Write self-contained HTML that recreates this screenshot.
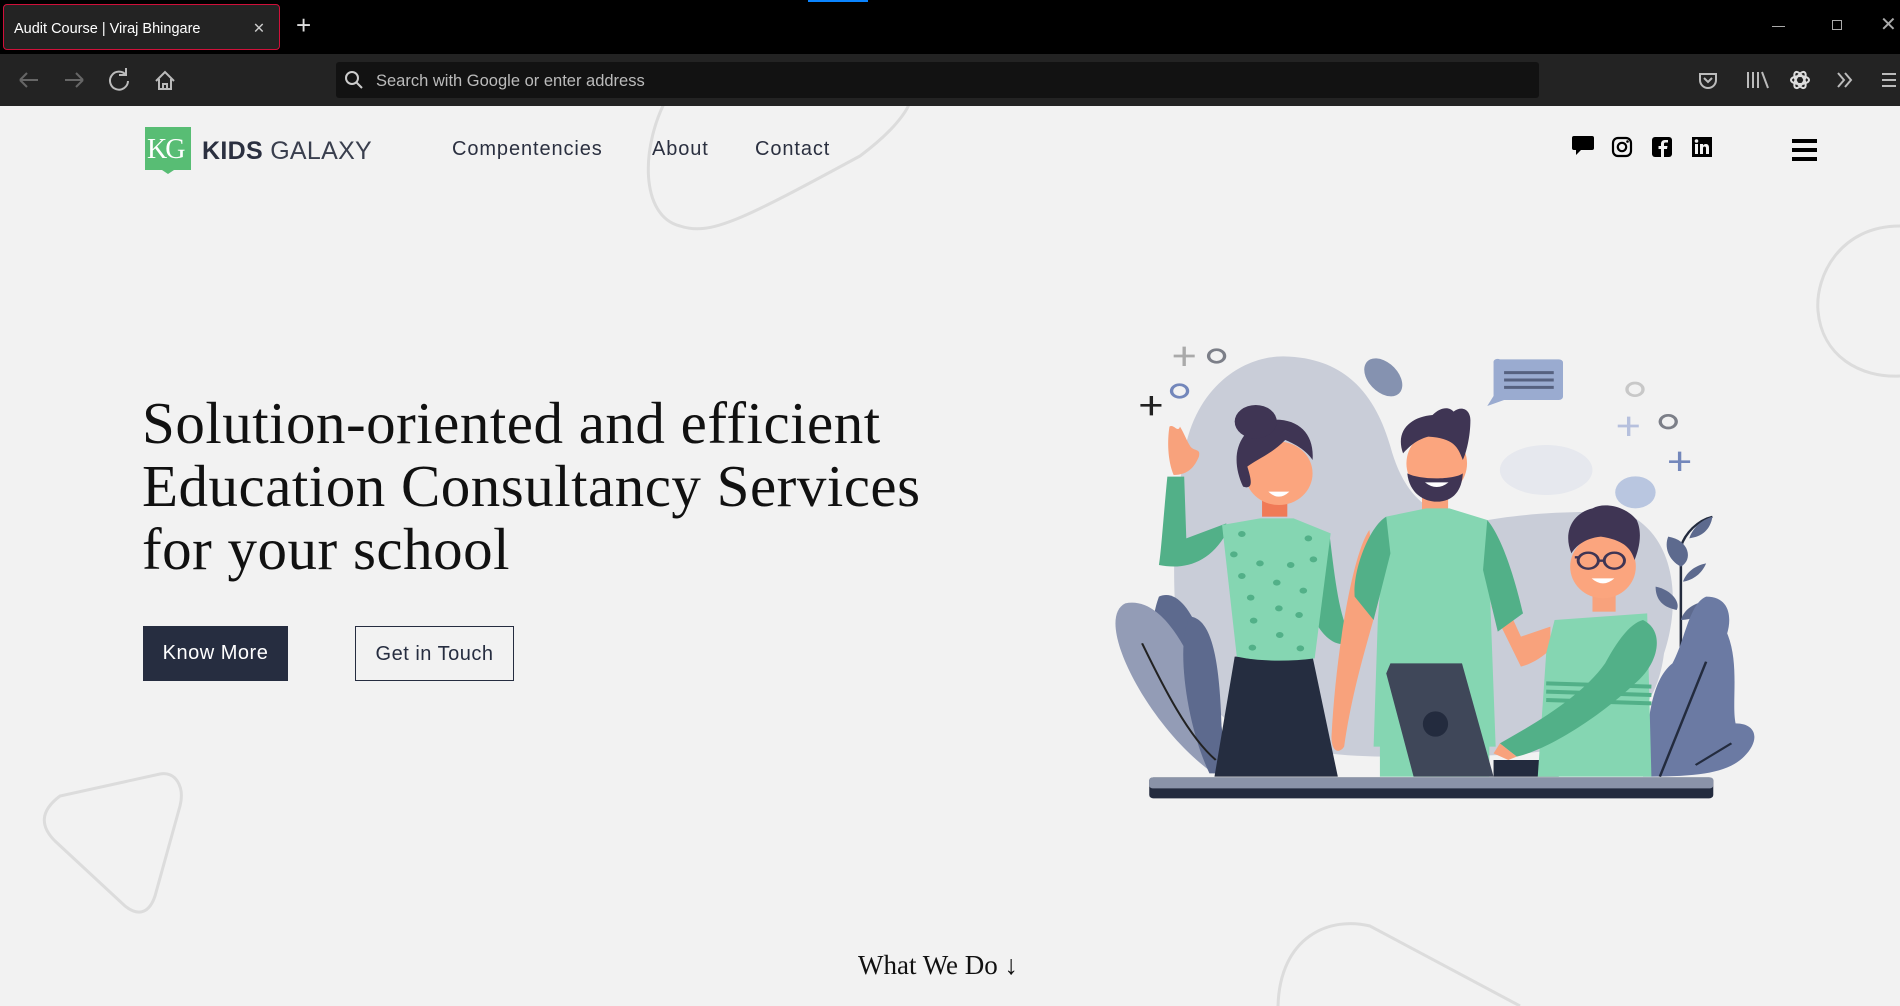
<!DOCTYPE html>
<html><head><meta charset="utf-8"><style>
*{margin:0;padding:0;box-sizing:border-box}
body{width:1900px;height:1006px;overflow:hidden;background:#f2f2f2;font-family:"Liberation Sans",sans-serif;position:relative}
.abs{position:absolute}
#tabs{left:0;top:0;width:1900px;height:54px;background:#000}
#tab{left:3px;top:4px;width:277px;height:46px;background:#232323;border:1px solid #d0103a;border-radius:4px;color:#fff;font-size:14.5px;line-height:48px;padding-left:10px}
#bar{left:0;top:54px;width:1900px;height:52px;background:#232323}
#url{left:336px;top:62px;width:1203px;height:36px;background:#121212;border-radius:3px;color:#bbb;font-size:16.5px;line-height:38px;padding-left:40px}
.nav{top:138px;font-size:20px;color:#2b3040;letter-spacing:0.9px}
h1{position:absolute;left:142px;top:392px;font-family:"Liberation Serif",serif;font-weight:normal;font-size:59px;line-height:63px;color:#111;letter-spacing:0.5px}
.btn{top:626px;height:55px;font-size:20px;line-height:55px;text-align:center;letter-spacing:0.5px}
</style></head><body>
<div class="abs" id="tabs"></div>
<div class="abs" id="tab">Audit Course | Viraj Bhingare<span style="position:absolute;right:14px;color:#ccc">✕</span></div>
<div class="abs" style="left:296px;top:10px;color:#ddd;font-size:26px">+</div>
<div class="abs" style="left:808px;top:0;width:60px;height:2px;background:#0a84ff"></div>
<div class="abs" style="left:1772px;top:26px;width:13px;height:1px;background:#aaa"></div>
<div class="abs" style="left:1832px;top:20px;width:10px;height:10px;border:1px solid #aaa"></div>
<div class="abs" style="left:1880px;top:12px;color:#aaa;font-size:20px">✕</div>
<div class="abs" id="bar"></div>
<svg class="abs" style="left:0;top:54px" width="1900" height="52" fill="none" stroke-width="2">
<path d="M20 26h18M20 26l7-7M20 26l7 7" stroke="#666"/>
<path d="M65 26h18M83 26l-7-7M83 26l-7 7" stroke="#666"/>
<path d="M126 21a9 9 0 1 0 2 6M126 14v7h-7" stroke="#bbb"/>
<path d="M156 27l9-9 9 9M159 25v10h12V25M163 35v-5h4v5" stroke="#bbb"/>
<path d="M1700 20h16v6a8 8 0 0 1-16 0z M1704 24l4 4 4-4" stroke="#bbb"/>
<path d="M1748 18v16M1753 18v16M1758 18v16M1762 18l6 16" stroke="#bbb"/>
<ellipse cx="1800" cy="26" rx="9" ry="4" stroke="#ddd"/><ellipse cx="1800" cy="26" rx="9" ry="4" transform="rotate(60 1800 26)" stroke="#ddd"/><ellipse cx="1800" cy="26" rx="9" ry="4" transform="rotate(-60 1800 26)" stroke="#ddd"/>
<path d="M1838 19l6 7-6 7M1845 19l6 7-6 7" stroke="#bbb"/>
<path d="M1882 20h14M1882 26h14M1882 32h14" stroke="#bbb"/>
</svg>
<div class="abs" id="url">Search with Google or enter address</div>
<svg class="abs" style="left:344px;top:70px" width="20" height="20" fill="none" stroke="#ccc" stroke-width="2"><circle cx="8" cy="8" r="6"/><path d="M12 12l6 6"/></svg>

<svg class="abs" style="left:0;top:106px" width="1900" height="900" fill="none" stroke="#dcdcdc" stroke-width="3">
<path d="M668 -10C640 40 640 110 680 120 710 130 740 115 860 50 900 20 910 0 912 -10"/>
<path d="M1900 120C1840 120 1815 170 1818 205 1822 250 1860 272 1900 270"/>
<path d="M60 690C40 705 40 720 55 735L125 800C140 812 150 805 155 790L180 700C185 680 175 665 160 668Z"/>
<path d="M1278 900C1280 830 1330 810 1370 820L1520 900"/>
</svg>

<div class="abs" style="left:145px;top:127px;width:46px;height:43px;background:#58bd74"></div>
<div class="abs" style="left:159px;top:168px;width:0;height:0;border-left:9px solid transparent;border-right:9px solid transparent;border-top:6px solid #58bd74"></div>
<div class="abs" style="left:147px;top:134px;color:#fff;font-family:'Liberation Serif',serif;font-size:28px;letter-spacing:-2px">KG</div>
<div class="abs" style="left:202px;top:137px;font-size:25px;color:#2b3040;letter-spacing:0.3px"><b>KIDS</b> <span style="color:#3a3f4e">GALAXY</span></div>
<div class="abs nav" style="left:452px">Compentencies</div>
<div class="abs nav" style="left:652px">About</div>
<div class="abs nav" style="left:755px">Contact</div>

<svg class="abs" style="left:1570px;top:134px" width="150" height="26">
<path d="M3 2h18a2 2 0 0 1 2 2v10a2 2 0 0 1-2 2H10l-5 5v-5H3a2 2 0 0 1-2-2V4a2 2 0 0 1 2-2z" fill="#000" transform="translate(1 0)"/>
<rect x="43" y="4" width="18" height="18" rx="5" fill="none" stroke="#000" stroke-width="2.2"/><circle cx="52" cy="13" r="4.2" fill="none" stroke="#000" stroke-width="2.2"/><circle cx="57.5" cy="7.5" r="1.3" fill="#000"/>
<rect x="82" y="3" width="20" height="20" rx="3" fill="#000"/><path d="M94 23v-8h3l.5-3H94v-2c0-1 .4-1.5 1.5-1.5H98V6h-3c-3 0-4 2-4 4v2h-2.5v3H91v8z" fill="#f2f2f2"/>
<rect x="122" y="3" width="20" height="20" fill="#000"/><rect x="125" y="10" width="3" height="10" fill="#f2f2f2"/><circle cx="126.5" cy="7" r="1.8" fill="#f2f2f2"/><path d="M130 10h3v1.5c1-2 6-2.5 6 2V20h-3v-6c0-2-3-2-3 0v6h-3z" fill="#f2f2f2"/>
</svg>
<div class="abs" style="left:1792px;top:139px;width:25px;height:3.5px;background:#000"></div>
<div class="abs" style="left:1792px;top:148px;width:25px;height:3.5px;background:#000"></div>
<div class="abs" style="left:1792px;top:157px;width:25px;height:3.5px;background:#000"></div>

<h1>Solution-oriented and efficient<br>Education Consultancy Services<br>for your school</h1>
<div class="abs btn" style="left:143px;width:145px;background:#262d40;color:#fff">Know More</div>
<div class="abs btn" style="left:355px;width:159px;border:1px solid #262d40;color:#262d40">Get in Touch</div>

<div class="abs" style="left:858px;top:950px;font-family:'Liberation Serif',serif;font-size:27px;color:#111">What We Do ↓</div>

<svg class="abs" style="left:1100px;top:320px" width="660" height="490" viewBox="0 0 1568 1470" preserveAspectRatio="none">
<path d="M200 400C230 180 360 100 450 110 600 120 660 250 690 380 720 520 780 600 900 605 1000 580 1140 570 1250 580 1370 650 1380 850 1340 1000 1310 1300 1100 1310 700 1310 300 1310 220 1160 180 900 170 700 180 560 200 400Z" fill="#c9cdd8"/>
<ellipse cx="1060" cy="450" rx="110" ry="75" fill="#e6e8ee"/>
<ellipse cx="673" cy="172" rx="38" ry="62" transform="rotate(-30 673 172)" fill="#8592b0"/>
<ellipse cx="1272" cy="517" rx="48" ry="48" fill="#b9c6e0"/>
<path d="M950 118h140a10 10 0 0 1 10 10v102a10 10 0 0 1-10 10H960l-40 18 15-30V128a10 10 0 0 1 15-10z" fill="#9aabd0"/>
<path d="M960 158h118M960 180h118M960 202h118" stroke="#56617f" stroke-width="9"/>
<g fill="none" stroke-width="8"><circle cx="277" cy="108" r="19" stroke="#7c7f88"/><circle cx="189" cy="213" r="19" stroke="#7387bb"/><circle cx="1271" cy="208" r="19" stroke="#c8c8c8"/><circle cx="1350" cy="305" r="19" stroke="#7c7f88"/>
<path d="M200 80v58M175 108h50" stroke="#aaa"/><path d="M122 228v58M96 256h50" stroke="#222"/><path d="M1256 290v58M1230 318h50" stroke="#b6c0dd"/><path d="M1377 395v58M1352 425h50" stroke="#7387bb"/></g>
<path d="M140 830C210 790 280 1000 300 1360L280 1360C180 1200 90 1000 140 830Z" fill="#5d6a8e"/>
<path d="M60 850C170 820 260 1100 300 1360L270 1360C120 1230 -20 900 60 850Z" fill="#939cb6"/>
<path d="M215 890C280 900 290 1100 290 1360L260 1360C200 1200 180 950 215 890Z" fill="#5d6a8e"/>
<path d="M100 970C150 1100 210 1250 275 1320" stroke="#222" stroke-width="5" fill="none"/>
<path d="M1380 1020V680C1390 640 1420 600 1455 590" stroke="#232b3e" stroke-width="6" fill="none"/>
<path d="M1350 650C1400 660 1410 720 1380 740 1350 720 1340 680 1350 650ZM1320 800C1360 810 1380 850 1370 870 1330 860 1320 830 1320 800ZM1440 730C1430 760 1410 780 1385 785 1395 750 1420 735 1440 730ZM1455 840C1440 880 1410 900 1380 900 1390 860 1420 845 1455 840ZM1455 590C1450 630 1430 650 1400 655 1410 620 1430 600 1455 590Z" fill="#5d6a8e"/>
<path d="M1440 830C1500 830 1500 900 1490 940 1520 1030 1500 1150 1510 1210 1560 1210 1570 1260 1530 1310 1490 1360 1420 1370 1290 1370 1300 1200 1310 1080 1360 1030 1390 960 1400 850 1440 830Z" fill="#6b7aa3"/>
<path d="M1440 1025L1330 1370M1500 1270L1415 1335" stroke="#232b3e" stroke-width="6"/>
<path d="M160 470C150 600 145 700 140 735 200 750 260 730 300 640L300 610 205 655 200 470Z" fill="#52b088"/>
<path d="M175 465C160 420 160 360 165 320 175 310 185 340 190 320 200 340 205 360 215 380 225 395 240 385 235 410 225 440 210 465 175 465Z" fill="#f8a27c"/>
<path d="M545 640C560 800 570 900 600 960 560 1000 520 930 510 900Z" fill="#52b088"/>
<path d="M320 1010L505 1010 565 1370 272 1370Z" fill="#252d40"/>
<path d="M290 615L380 595 460 595 548 640 510 1015C450 1025 380 1025 325 1010Z" fill="#85d6b2"/>
<g fill="#52b088"><circle cx="337" cy="642" r="9"/><circle cx="495" cy="655" r="9"/><circle cx="318" cy="703" r="9"/><circle cx="380" cy="730" r="9"/><circle cx="453" cy="735" r="9"/><circle cx="507" cy="718" r="9"/><circle cx="337" cy="768" r="9"/><circle cx="420" cy="788" r="9"/><circle cx="483" cy="812" r="9"/><circle cx="358" cy="833" r="9"/><circle cx="425" cy="865" r="9"/><circle cx="473" cy="885" r="9"/><circle cx="365" cy="902" r="9"/><circle cx="427" cy="945" r="9"/><circle cx="362" cy="983" r="9"/><circle cx="476" cy="985" r="9"/></g>
<rect x="385" y="540" width="60" height="50" fill="#f07a57"/>
<ellipse cx="425" cy="460" rx="80" ry="95" fill="#fba57e"/>
<path d="M340 500C310 420 320 330 400 300 470 290 510 340 505 420 490 390 460 370 440 360 410 400 370 420 350 440 360 480 365 510 340 500Z" fill="#3f3554"/>
<circle cx="370" cy="305" r="50" fill="#3f3554"/>
<path d="M400 515Q425 545 450 515Z" fill="#fff"/>
<path d="M640 630C600 700 560 1000 550 1250 550 1300 570 1300 580 1280 600 1100 640 950 660 850Z" fill="#f8a27c"/>
<path d="M930 860L1000 1040C1030 1030 1050 1010 1070 990L1070 920 1000 950 960 840Z" fill="#f8a27c"/>
<rect x="765" y="500" width="62" height="80" fill="#f8a27c"/>
<path d="M680 590L775 565 830 565 920 600 940 1280 650 1280 660 900Z" fill="#85d6b2"/>
<path d="M680 590C640 620 600 750 605 830L650 900 690 700ZM920 600C960 660 990 800 1005 880L945 935 910 750Z" fill="#52b088"/>
<rect x="665" y="1275" width="260" height="95" fill="#85d6b2"/>
<ellipse cx="800" cy="430" rx="72" ry="95" fill="#fba57e"/>
<path d="M730 460C735 520 770 545 800 545 840 545 860 510 862 460 840 480 760 480 730 460Z" fill="#3f3554"/>
<path d="M720 400C700 330 740 290 790 285 810 260 830 260 840 275 860 255 880 270 880 300 880 350 870 400 862 420 850 380 840 355 780 350 750 360 735 380 720 400Z" fill="#3f3554"/>
<path d="M772 487Q800 515 828 487Z" fill="#fff"/>
<path d="M690 1030L860 1030 935 1370 745 1370 680 1060Z" fill="#3f4759"/>
<ellipse cx="797" cy="1212" rx="30" ry="38" fill="#232b3e"/>
<rect x="935" y="1320" width="155" height="50" fill="#232b3e"/>
<path d="M1080 900L1300 880 1310 1370 1040 1370 1060 1000Z" fill="#85d6b2"/>
<path d="M1060 1090L1310 1100M1060 1115L1310 1125M1060 1140L1310 1150" stroke="#52b088" stroke-width="12"/>
<path d="M1290 900C1340 930 1330 1020 1280 1080 1180 1200 1060 1290 990 1310L950 1270C1050 1200 1150 1120 1200 1030 1230 960 1260 910 1290 900Z" fill="#52b088"/>
<path d="M950 1270L990 1310 970 1320 935 1300Z" fill="#f8a27c"/>
<rect x="1170" y="800" width="55" height="75" fill="#f8a27c"/>
<ellipse cx="1195" cy="740" rx="78" ry="95" fill="#fba57e"/>
<path d="M1120 700C1100 640 1120 580 1170 565 1200 545 1250 560 1275 600 1290 640 1280 690 1270 720 1260 680 1240 660 1190 650 1150 655 1130 680 1120 700Z" fill="#3f3554"/>
<g fill="none" stroke="#3f3554" stroke-width="7"><circle cx="1160" cy="722" r="24"/><circle cx="1222" cy="722" r="24"/><path d="M1184 722h14M1128 712h8"/></g>
<path d="M1168 775Q1195 805 1222 775Z" fill="#fff"/>
<rect x="117" y="1372" width="1340" height="63" rx="10" fill="#232b3e"/>
<rect x="117" y="1372" width="1340" height="33" rx="8" fill="#8a93a8"/>
</svg>
</body></html>
